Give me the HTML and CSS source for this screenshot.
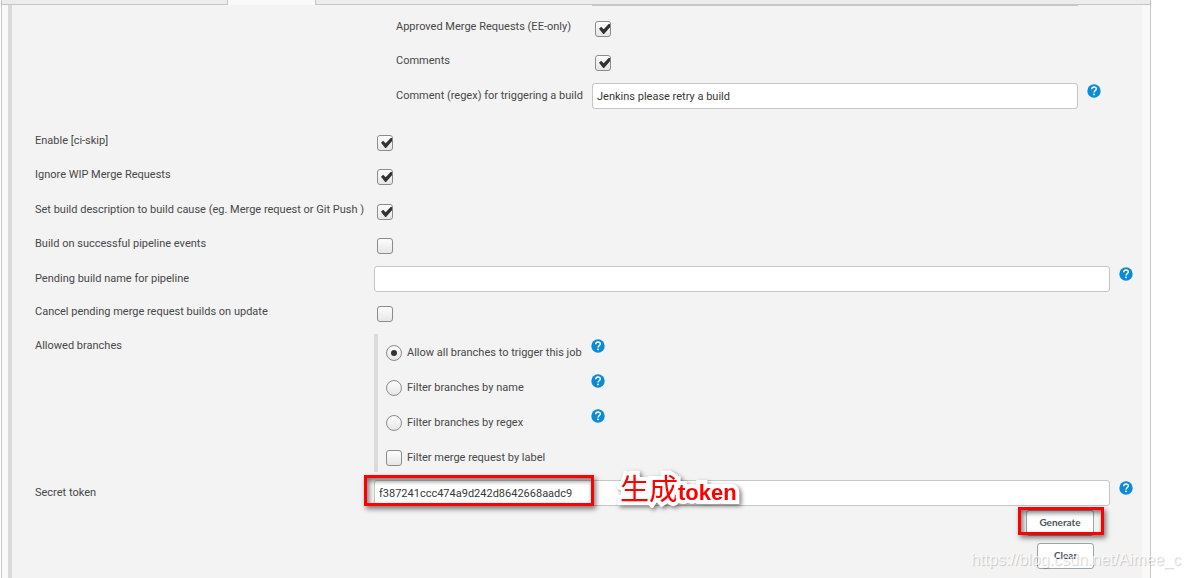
FILE: index.html
```html
<!DOCTYPE html>
<html lang="en">
<head>
<meta charset="utf-8">
<title>Job configuration</title>
<link rel="stylesheet" href="styles.css">
</head>
<body>
<svg class="symbols" aria-hidden="true">
  <symbol id="help-icon" viewBox="0 0 14 14">
    <circle cx="7" cy="7" r="6.7" fill="#0b8ad6"/>
    <path d="M4.7 5.2C4.7 3.8 5.7 3 7 3s2.3.8 2.3 2c0 1.6-2.3 1.7-2.3 3.6" fill="none" stroke="#fff" stroke-width="1.4"/>
    <rect x="6.2" y="9.6" width="1.6" height="1.6" fill="#fff"/>
  </symbol>
</svg>
<main class="panel">
  <div class="tabs"><div class="tab-active"></div></div>
  <form class="config">
    <div class="nested">
      <div class="clipped-field"></div>
      <div class="row">
        <label class="name" for="approved">Approved Merge Requests (EE-only)</label>
        <div class="control"><input class="check" type="checkbox" id="approved" checked></div>
      </div>
      <div class="row tall">
        <label class="name" for="comments">Comments</label>
        <div class="control"><input class="check" type="checkbox" id="comments" checked></div>
      </div>
      <div class="row last">
        <label class="name" for="regex">Comment (regex) for triggering a build</label>
        <div class="control"><input class="text" type="text" id="regex" value="Jenkins please retry a build"></div>
        <svg class="help"><use href="#help-icon"/></svg>
      </div>
    </div>
    <div class="row">
      <label class="name" for="skip">Enable [ci-skip]</label>
      <div class="control"><input class="check" type="checkbox" id="skip" checked></div>
    </div>
    <div class="row tall">
      <label class="name" for="wip">Ignore WIP Merge Requests</label>
      <div class="control"><input class="check" type="checkbox" id="wip" checked></div>
    </div>
    <div class="row">
      <label class="name" for="cause">Set build description to build cause (eg. Merge request or Git Push )</label>
      <div class="control"><input class="check" type="checkbox" id="cause" checked></div>
    </div>
    <div class="row tall">
      <label class="name" for="events">Build on successful pipeline events</label>
      <div class="control"><input class="check" type="checkbox" id="events"></div>
    </div>
    <div class="row short">
      <label class="name" for="pending">Pending build name for pipeline</label>
      <div class="control"><input class="text" type="text" id="pending"></div>
      <svg class="help"><use href="#help-icon"/></svg>
    </div>
    <div class="row">
      <label class="name" for="cancel">Cancel pending merge request builds on update</label>
      <div class="control"><input class="check" type="checkbox" id="cancel"></div>
    </div>
    <div class="row branches">
      <span class="name" id="branches">Allowed branches</span>
      <div class="options" role="radiogroup" aria-labelledby="branches">
        <div class="option">
          <label><input class="radio" type="radio" name="branch" checked>Allow all branches to trigger this job</label>
          <svg class="help"><use href="#help-icon"/></svg>
        </div>
        <div class="option">
          <label><input class="radio" type="radio" name="branch">Filter branches by name</label>
          <svg class="help"><use href="#help-icon"/></svg>
        </div>
        <div class="option">
          <label><input class="radio" type="radio" name="branch">Filter branches by regex</label>
          <svg class="help"><use href="#help-icon"/></svg>
        </div>
        <div class="option">
          <label><input class="check" type="checkbox">Filter merge request by label</label>
        </div>
      </div>
    </div>
    <div class="row secret">
      <label class="name" for="token">Secret token</label>
      <div class="control">
        <input class="text" type="text" id="token" value="f387241ccc474a9d242d8642668aadc9">
        <div class="mark mark-token"></div>
        <div class="note"><span class="note-cjk" lang="zh">生成</span>token</div>
      </div>
      <svg class="help"><use href="#help-icon"/></svg>
    </div>
    <div class="actions">
      <div class="marked">
        <button class="button wide" type="button">Generate</button>
        <div class="mark mark-button"></div>
      </div>
      <button class="button" type="button">Clear</button>
    </div>
  </form>
</main>
<div class="watermark">https://blog.csdn.net/Aimee_c</div>
</body>
</html>
```
FILE: styles.css
```css
* { box-sizing: border-box; }

body {
  position: relative;
  height: 100vh;
  margin: 0;
  overflow: hidden;
  background: #fff;
  color: #484848;
  font: 11px/16px Roboto, sans-serif;
}

.symbols { display: none; }

.panel {
  min-height: 100vh;
  margin: 0 38px 0 1px;
  border: solid #c6c6c6;
  border-width: 0 1px;
  background: #f9f9f9;
}

.tabs {
  height: 5px;
  padding-left: 225px;
  border-bottom: 1px solid #c6c6c6;
  background: #ececec;
}

.tab-active {
  width: 89px;
  height: 5px;
  border: solid #c6c6c6;
  border-width: 0 1px;
  background: #f9f9f9;
}

.config {
  min-height: calc(100vh - 5px);
  margin: 0 8px 0 6px;
  padding-left: 23px;
  border-left: 4px solid #dadada;
  background: #f3f3f3;
}

.nested {
  margin: 0 32px 0 361px;
}

.clipped-field {
  height: 9px;
  margin: 0 32px 0 196px;
  border-top: 1px solid #c6c6c6;
}

.row {
  display: flex;
  height: 34px;
}

.row.tall { height: 35px; }
.row.short { height: 33px; }
.row.last { height: 45px; }
.row.branches { height: 147px; }
.row.secret { height: 30px; }

.name {
  flex: none;
  width: 339px;
  padding-top: 5px;
  white-space: nowrap;
}

.nested .name { width: 196px; }

.control {
  position: relative;
  flex: 1;
}

.row:not(:has(> .help)) > .control { margin-right: 32px; }

.text {
  display: block;
  width: 100%;
  height: 26px;
  padding: 0 4px;
  border: 1px solid #c6c6c6;
  border-radius: 3px;
  background: #fff;
  color: #383838;
  font: inherit;
}

.help {
  flex: none;
  width: 14px;
  height: 14px;
  margin: 1px 9px 0;
}

.check,
.radio {
  position: relative;
  flex: none;
  width: 16px;
  height: 16px;
  margin: 0;
  appearance: none;
  border: 1px solid #8c8c88;
  border-radius: 3px;
  background: linear-gradient(#fdfdfd, #e6e6e6);
}

.control > .check {
  display: block;
  margin: 7px 0 0 3px;
}

.radio { border-radius: 50%; }

.check:checked::before {
  content: "";
  position: absolute;
  inset: 2px 0 2px 3px;
  background: #2e3436;
  clip-path: polygon(0 48%, 20% 28%, 42% 52%, 88% 0, 100% 0, 100% 32%, 46% 100%, 38% 100%);
}

.radio:checked::before {
  content: "";
  position: absolute;
  inset: 4px;
  border-radius: 50%;
  background: #2e3436;
}

.options {
  height: 138px;
  margin-top: 1px;
  padding: 5px 0 0 8px;
  border-left: 4px solid #dadada;
}

.option {
  display: flex;
  width: 228px;
  height: 35px;
  justify-content: space-between;
}

.option label {
  display: flex;
  align-items: center;
  height: 28px;
  gap: 5px;
  white-space: nowrap;
}

.option .help { margin: 0 9px 0 0; }

.mark {
  position: absolute;
  border: 3px solid #fe0000;
  box-shadow: 2px 3px 5px #00000080, inset 2px 3px 5px #00000080;
  pointer-events: none;
}

.mark-token {
  top: -5px;
  left: -10px;
  width: 230px;
  height: 31px;
}

.note {
  position: absolute;
  top: -10px;
  left: 246px;
  color: #fe0000;
  font: bold 22px/34px "Liberation Sans", sans-serif;
  white-space: nowrap;
  -webkit-text-stroke: 8px #fff;
  paint-order: stroke fill;
  stroke-linejoin: round;
  filter: drop-shadow(2px 2px 2px #00000080);
}

.note-cjk {
  font: 29px/34px "Noto Sans CJK SC", sans-serif;
}

.actions {
  display: flex;
  flex-direction: column;
  align-items: flex-end;
  gap: 7px;
  margin-right: 48px;
}

.marked { position: relative; }

.mark-button {
  top: -3px;
  right: -10px;
  width: 86px;
  height: 28px;
}

.button {
  display: block;
  width: 57px;
  height: 26px;
  padding: 0 0 2px;
  border: 1px solid #9aa5ae;
  border-radius: 3px;
  background: #fff;
  color: #4d545d;
  font: bold 10px/16px Lato, sans-serif;
}

.button.wide { width: 68px; }

.watermark {
  position: absolute;
  right: 8px;
  bottom: 8px;
  color: #ffffffc0;
  font: 16px/20px "Liberation Sans", sans-serif;
  text-shadow: 1px 1px 1px #00000030;
}
```
